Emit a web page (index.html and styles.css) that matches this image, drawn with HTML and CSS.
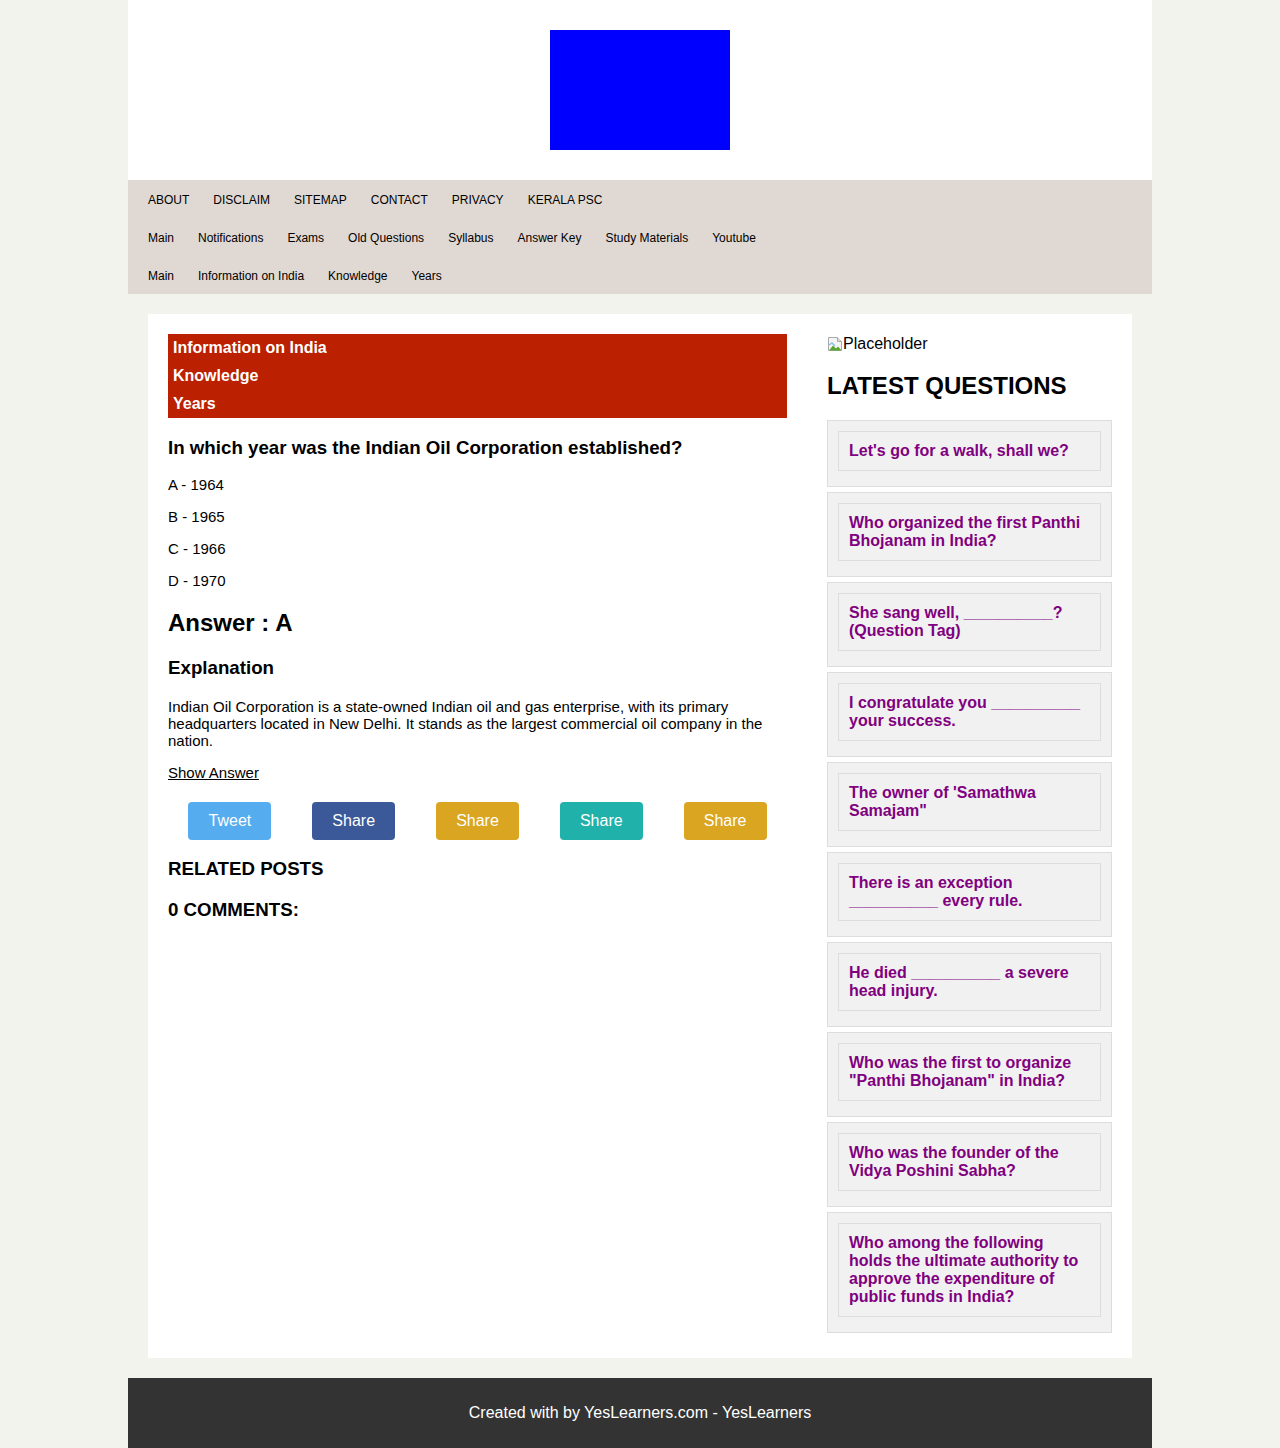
FILE: index.html
```html
<!DOCTYPE html>
<html lang="en">
<head>
<meta charset="utf-8">
<title>In which year was the Indian Oil Corporation established?</title>
<link rel="stylesheet" href="styles.css">
</head>
<body>
<div class="wrap">
  <header class="site-header">
    <div class="logo"></div>
  </header>
  <nav class="nav">
    <div class="nav-row upper">
      <a href="#">ABOUT</a><a href="#">DISCLAIM</a><a href="#">SITEMAP</a><a href="#">CONTACT</a><a href="#">PRIVACY</a><a href="#">KERALA PSC</a>
    </div>
    <div class="nav-row">
      <a href="#">Main</a><a href="#">Notifications</a><a href="#">Exams</a><a href="#">Old Questions</a><a href="#">Syllabus</a><a href="#">Answer Key</a><a href="#">Study Materials</a><a href="#">Youtube</a>
    </div>
    <div class="nav-row">
      <a href="#">Main</a><a href="#">Information on India</a><a href="#">Knowledge</a><a href="#">Years</a>
    </div>
  </nav>
  <main class="main">
    <div class="content">
      <article class="post">
        <div class="labels">
          <a href="#">Information on India</a>
          <a href="#">Knowledge</a>
          <a href="#">Years</a>
        </div>
        <h3 class="question">In which year was the Indian Oil Corporation established?</h3>
        <p class="option">A - 1964</p>
        <p class="option">B - 1965</p>
        <p class="option">C - 1966</p>
        <p class="option">D - 1970</p>
        <h2 class="answer">Answer : A</h2>
        <h3 class="expl-title">Explanation</h3>
        <p class="expl">Indian Oil Corporation is a state-owned Indian oil and gas enterprise, with its primary headquarters located in New Delhi. It stands as the largest commercial oil company in the nation.</p>
        <p class="show-wrap"><a class="show" href="#">Show Answer</a></p>
        <div class="share">
          <div class="share-cell"><a class="btn tw" href="#">Tweet</a></div>
          <div class="share-cell"><a class="btn fb" href="#">Share</a></div>
          <div class="share-cell"><a class="btn gold" href="#">Share</a></div>
          <div class="share-cell"><a class="btn teal" href="#">Share</a></div>
          <div class="share-cell"><a class="btn gold" href="#">Share</a></div>
        </div>
        <h3 class="section-title">RELATED POSTS</h3>
        <h3 class="section-title">0 COMMENTS:</h3>
      </article>
      <aside class="sidebar">
        <div class="placeholder">
          <svg class="broken" width="16" height="16" viewBox="0 0 16 16" aria-hidden="true">
            <path d="M1.5 1.5h9l4 4v9h-13z" fill="#f4f4f4" stroke="#a9a9a9"/>
            <path d="M10.5 1.5v4h4" fill="#ddd" stroke="#a9a9a9"/>
            <path d="M2 14.5l4-5 3 3 2-2 3.5 4z" fill="#5aa532"/>
            <path d="M2 9l3-2 3 3" fill="none" stroke="#8cc0e8" stroke-width="1.5"/>
          </svg><span>Placeholder</span>
        </div>
        <h2 class="latest">LATEST QUESTIONS</h2>
        <div class="qcard"><div class="qinner"><a href="#">Let's go for a walk, shall we?</a></div></div>
        <div class="qcard"><div class="qinner"><a href="#">Who organized the first Panthi Bhojanam in India?</a></div></div>
        <div class="qcard"><div class="qinner"><a href="#">She sang well, __________? (Question Tag)</a></div></div>
        <div class="qcard"><div class="qinner"><a href="#">I congratulate you __________ your success.</a></div></div>
        <div class="qcard"><div class="qinner"><a href="#">The owner of 'Samathwa Samajam"</a></div></div>
        <div class="qcard"><div class="qinner"><a href="#">There is an exception __________ every rule.</a></div></div>
        <div class="qcard"><div class="qinner"><a href="#">He died __________ a severe head injury.</a></div></div>
        <div class="qcard"><div class="qinner"><a href="#">Who was the first to organize "Panthi Bhojanam" in India?</a></div></div>
        <div class="qcard"><div class="qinner"><a href="#">Who was the founder of the Vidya Poshini Sabha?</a></div></div>
        <div class="qcard"><div class="qinner"><a href="#">Who among the following holds the ultimate authority to approve the expenditure of public funds in India?</a></div></div>
      </aside>
    </div>
  </main>
  <footer class="footer">Created with by YesLearners.com - YesLearners</footer>
</div>
</body>
</html>
```
FILE: styles.css
```css
* { box-sizing: border-box; }
html, body { margin: 0; padding: 0; }
body {
  background: #f3f3ee;
  font-family: "Liberation Sans", Arial, sans-serif;
  color: #000;
}
a { color: inherit; text-decoration: none; }

.wrap {
  width: 1024px;
  margin: 0 auto;
}

.site-header {
  background: #fff;
  padding: 30px 0;
  display: flex;
  justify-content: center;
}
.logo {
  width: 180px;
  height: 120px;
  background: #0000ff;
}

.nav {
  background: #e0d8d3;
  padding: 0 8px;
}
.nav-row {
  display: flex;
  font-size: 12px;
  line-height: 14px;
}
.nav-row a {
  padding: 13px 12px 11px;
  color: #000;
}

.main {
  margin: 20px 0;
  padding: 0 20px;
}
.content {
  background: #fff;
  padding: 20px;
  display: grid;
  grid-template-columns: 619px 285px;
  column-gap: 40px;
  align-items: start;
}

.labels {
  background: #bb2000;
  display: flex;
  flex-direction: column;
}
.labels a {
  color: #fff;
  font-weight: bold;
  font-size: 16px;
  line-height: 28px;
  padding-left: 5px;
}

.question {
  font-size: 18.72px;
  line-height: 21.5px;
  margin: 18.72px 0 18px;
}
.option {
  font-size: 15px;
  line-height: 17px;
  margin: 15px 0;
}
.answer {
  font-size: 24px;
  line-height: 28px;
  margin: 20px 0;
}
.expl-title {
  font-size: 18.72px;
  line-height: 21.5px;
  margin: 19px 0;
}
.expl {
  font-size: 15px;
  line-height: 17px;
  margin: 19px 0 15px;
}
.show-wrap {
  font-size: 15px;
  line-height: 17px;
  margin: 15px 0 0;
}
.show {
  text-decoration: underline;
}
.share {
  display: flex;
  margin-top: 21px;
}
.share-cell {
  flex: 1;
  display: flex;
  justify-content: center;
}
.btn {
  display: block;
  width: 83px;
  height: 38px;
  line-height: 38px;
  text-align: center;
  color: #fff;
  font-size: 16px;
  border-radius: 4px;
}
.tw { background: #55acee; }
.fb { background: #3b5998; }
.gold { background: #daa520; }
.teal { background: #20b2aa; }

.section-title {
  font-size: 18.72px;
  line-height: 21.5px;
  margin: 18.72px 0 0;
}

.placeholder {
  display: flex;
  align-items: center;
  font-size: 16px;
  line-height: 18px;
  padding-top: 1px;
}
.broken { display: block; flex: none; }
.latest {
  font-size: 24px;
  line-height: 28px;
  margin: 19px 0 20px;
}
.qcard {
  background: #f1f1f1;
  border: 1px solid #ddd;
  padding: 10px;
  margin-bottom: 5px;
}
.qinner {
  border: 1px solid #ddd;
  padding: 10px;
  margin-bottom: 5px;
}
.qinner a {
  color: #800080;
  font-weight: bold;
  font-size: 16px;
  line-height: 18px;
}

.footer {
  background: #333;
  color: #fff;
  text-align: center;
  font-size: 16px;
  line-height: 18px;
  padding: 26px 0;
}
```
